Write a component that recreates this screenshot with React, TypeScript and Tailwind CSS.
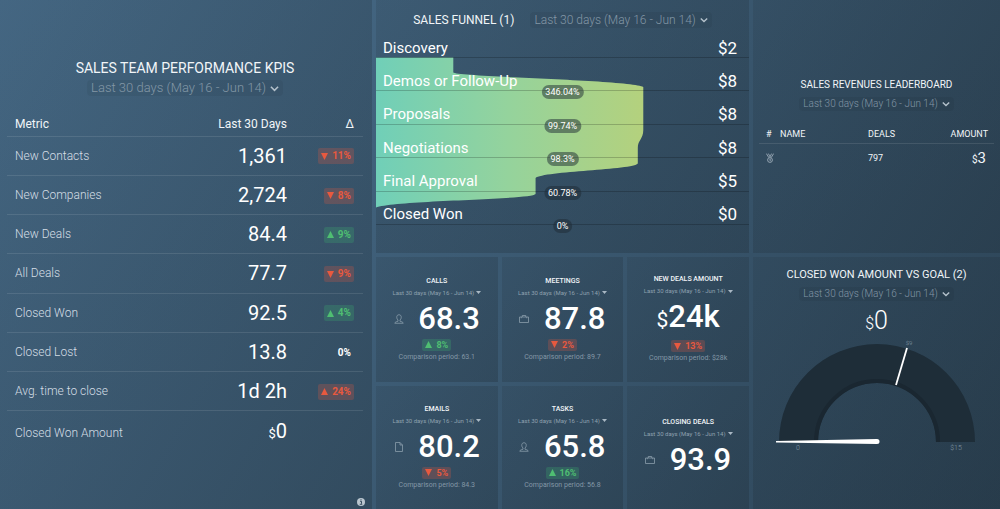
import type { ReactNode } from "react";

type Trend = "up" | "down";
type Tone = "good" | "bad" | "none";

interface Metric {
  name: string;
  value: string;
  prefix?: string;
  change?: string;
  trend?: Trend;
  tone?: Tone;
}

const metrics: Metric[] = [
  { name: "New Contacts", value: "1,361", change: "11%", trend: "down", tone: "bad" },
  { name: "New Companies", value: "2,724", change: "8%", trend: "down", tone: "bad" },
  { name: "New Deals", value: "84.4", change: "9%", trend: "up", tone: "good" },
  { name: "All Deals", value: "77.7", change: "9%", trend: "down", tone: "bad" },
  { name: "Closed Won", value: "92.5", change: "4%", trend: "up", tone: "good" },
  { name: "Closed Lost", value: "13.8", change: "0%", tone: "none" },
  { name: "Avg. time to close", value: "1d 2h", change: "24%", trend: "up", tone: "bad" },
  { name: "Closed Won Amount", value: "0", prefix: "$" },
];

const stages = [
  { name: "Discovery", amount: "$2" },
  { name: "Demos or Follow-Up", amount: "$8", rate: "346.04%" },
  { name: "Proposals", amount: "$8", rate: "99.74%" },
  { name: "Negotiations", amount: "$8", rate: "98.3%" },
  { name: "Final Approval", amount: "$5", rate: "60.78%" },
  { name: "Closed Won", amount: "$0", rate: "0%" },
];

const toneClass: Record<Tone, string> = {
  good: "bg-[#3cb371]/25 text-[#4fbe72]",
  bad: "bg-[#e0563f]/25 text-[#e8593f]",
  none: "text-white",
};

function Panel({ className = "", children }: { className?: string; children: ReactNode }) {
  return (
    <section className={`relative min-w-0 bg-linear-to-br from-[#1d2a33]/15 to-[#1d2a33]/30 ${className}`}>
      {children}
    </section>
  );
}

function Chevron({ className }: { className: string }) {
  return (
    <svg viewBox="0 0 10 10" className={className} fill="none" stroke="currentColor" strokeWidth="1.7" aria-hidden="true">
      <path d="M1 3l4 4 4-4" />
    </svg>
  );
}

function Caret() {
  return (
    <svg viewBox="0 0 10 6" className="h-[3px] w-[5px] text-[#a9b8c4]" fill="currentColor" aria-hidden="true">
      <path d="M0 0h10L5 6z" />
    </svg>
  );
}

function DateRange({ className = "", chevron = "size-2" }: { className?: string; chevron?: string }) {
  return (
    <button type="button" className={`inline-flex items-center gap-1 rounded bg-black/5 px-1 font-light text-[#8397a6] ${className}`}>
      Last 30 days (May 16 - Jun 14)
      <Chevron className={`${chevron} text-[#b4c1cb]`} />
    </button>
  );
}

function Delta({ value, trend, tone, className = "" }: { value: string; trend?: Trend; tone: Tone; className?: string }) {
  return (
    <span className={`inline-flex items-center gap-1 rounded-xs px-[3px] font-bold ${toneClass[tone]} ${className}`}>
      {trend && (
        <svg viewBox="0 0 10 10" className="size-[7px]" fill="currentColor" aria-hidden="true">
          <path d={trend === "up" ? "M5 0l5 10H0z" : "M0 0h10L5 10z"} />
        </svg>
      )}
      {value}
    </span>
  );
}

function PersonIcon() {
  return (
    <svg viewBox="0 0 20 20" className="size-[10px]" fill="none" stroke="currentColor" strokeWidth="1.5" aria-hidden="true">
      <path d="M10 1.5c-3 0-4.5 2-4.500 5 0 2.500 1 4.500 2.500 5.500v2.500c-3 .8-6 1.500-6.500 4h17c-.5-2.500-3.500-3.200-6.500-4V12c1.500-1 2.500-3 2.500-5.500 0-3-1.500-5-4.500-5z" />
    </svg>
  );
}

function BriefcaseIcon() {
  return (
    <svg viewBox="0 0 20 20" className="size-[10px]" fill="none" stroke="currentColor" strokeWidth="1.5" aria-hidden="true">
      <path d="M1 6h18v11H1zM6.500 6V3h7v3M4.500 6v2.500M15.500 6v2.500" />
    </svg>
  );
}

function FileIcon() {
  return (
    <svg viewBox="0 0 20 20" className="size-[10px]" fill="none" stroke="currentColor" strokeWidth="1.5" aria-hidden="true">
      <path d="M3 1h9l5 5v13H3zM12 1v5h5" />
    </svg>
  );
}

function MedalIcon() {
  return (
    <svg viewBox="0 0 20 24" className="h-[10px] w-2 text-[#a9b8c4]" fill="none" stroke="currentColor" strokeWidth="2" aria-hidden="true">
      <path d="M1 1l6 10M6 1l4 8 4-8M19 1l-6 10" />
      <circle cx="10" cy="17" r="6" />
      <path d="M9 15l1.500-1v6" />
    </svg>
  );
}

function KpiPanel() {
  return (
    <Panel className="pt-[60px] pr-[9px] pl-[7px]">
      <header className="flex flex-col items-center">
        <h2 className="text-[14px] leading-4 text-[#f1f5f8]">SALES TEAM PERFORMANCE KPIS</h2>
        <DateRange className="mt-1 text-[13px] leading-4" chevron="size-[9px]" />
      </header>

      <table className="mt-4 h-[342px] w-full border-collapse">
        <thead>
          <tr className="h-6 border-b border-white/10 text-[12px] leading-4 text-[#f1f5f8]">
            <th className="pl-2 text-left font-normal">Metric</th>
            <th className="text-right font-normal">Last 30 Days</th>
            <th className="w-[76px] pr-[9px] text-right font-normal">Δ</th>
          </tr>
        </thead>
        <tbody>
          {metrics.map((m) => (
            <tr key={m.name} className="border-b border-white/10 last:border-0">
              <td className="pl-2 text-[12px] leading-4 font-light text-[#d5dee5]">{m.name}</td>
              <td className="text-right text-[20px] leading-6 text-white">
                {m.prefix && <span className="text-[13px]">{m.prefix}</span>}
                {m.value}
              </td>
              <td className="pr-[9px] text-right leading-4">
                {m.change && <Delta value={m.change} trend={m.trend} tone={m.tone ?? "none"} className="text-[10px] leading-4" />}
              </td>
            </tr>
          ))}
        </tbody>
      </table>

      <button type="button" aria-label="Info" className="absolute right-[7px] bottom-[3px]">
        <svg viewBox="0 0 16 16" className="size-2" aria-hidden="true">
          <circle cx="8" cy="8" r="8" fill="#b9c5ce" />
          <path d="M6 6.500h3v5M5.500 12.500h5M8 2.500v2" stroke="#33495b" strokeWidth="2" fill="none" />
        </svg>
      </button>
    </Panel>
  );
}

function FunnelPanel() {
  return (
    <Panel className="h-[253px] pt-3">
      <header className="flex items-center justify-center gap-4">
        <h2 className="text-[12px] leading-4 text-[#f1f5f8]">SALES FUNNEL (1)</h2>
        <DateRange className="text-[12px] leading-4" />
      </header>

      <div className="relative mt-[10px] h-[187px]">
        <svg viewBox="0 0 374 187" preserveAspectRatio="none" className="absolute inset-0 size-full" aria-hidden="true">
          <defs>
            <linearGradient id="funnel">
              <stop offset="0" stopColor="#70cfb8" />
              <stop offset="0.5" stopColor="#95d39c" />
              <stop offset="1" stopColor="#b4d17d" />
            </linearGradient>
          </defs>
          <path
            fill="url(#funnel)"
            d="M0 19.500H77.500V34.500C82 39 258 42 268 49V92C268 101 262.500 102 262.500 110V125.500C258 132 168 133 160 140V156C156 162 20 162 0 169.500Z"
          />
        </svg>

        <ul className="relative flex h-full flex-col justify-between">
          {stages.map((s) => (
            <li key={s.name} className="relative flex h-5 items-center justify-between border-b border-black/20 px-[7px] pr-3 text-white">
              <span className="text-[15px] leading-5">{s.name}</span>
              <span className="text-[17px] leading-5">{s.amount}</span>
              {s.rate && (
                <span className="absolute top-[14px] left-1/2 -translate-x-1/2 rounded-full bg-[#1d2a33]/50 px-1 text-[9px] leading-[14px]">
                  {s.rate}
                </span>
              )}
            </li>
          ))}
        </ul>
      </div>
    </Panel>
  );
}

interface StatProps {
  title: string;
  value: string;
  prefix?: string;
  icon?: ReactNode;
  change?: string;
  trend?: Trend;
  tone?: Tone;
  comparison?: string;
}

function StatCard({ title, value, prefix, icon, change, trend, tone = "none", comparison }: StatProps) {
  return (
    <Panel className="flex flex-col items-center justify-center pb-[2px]">
      <h3 className="text-[7px] leading-2 font-medium text-[#f1f5f8]">{title}</h3>
      <button type="button" className="mt-1 flex items-center gap-[2px] text-[6px] leading-2 text-[#8fa1af]">
        Last 30 days (May 16 - Jun 14)
        <Caret />
      </button>
      <div className="mt-[6px] flex w-[86px] items-center justify-center">
        {icon && <span className="mr-auto text-[#8fa1af]">{icon}</span>}
        <p className="text-[31px] leading-8 font-medium text-white">
          {prefix && <span className="text-[21px] font-normal">{prefix}</span>}
          {value}
        </p>
      </div>
      {change && <Delta value={change} trend={trend} tone={tone} className="mt-1 text-[9px] leading-3" />}
      {comparison && <p className="mt-[2px] text-[7px] leading-2 text-[#8397a6]">Comparison period: {comparison}</p>}
    </Panel>
  );
}

function LeaderboardPanel() {
  return (
    <Panel className="h-[253px] px-[6px] pt-[77px]">
      <header className="flex flex-col items-center">
        <h2 className="text-[10px] leading-4 text-[#f1f5f8]">SALES REVENUES LEADERBOARD</h2>
        <DateRange className="mt-1 text-[10px] leading-[14px]" />
      </header>

      <table className="mt-[15px] w-full border-collapse text-[9px] text-[#f1f5f8]">
        <thead>
          <tr className="h-[17px] border-b border-white/10 leading-3">
            <th className="w-5 pl-[7px] text-left font-normal">#</th>
            <th className="pl-[1px] text-left font-normal">NAME</th>
            <th className="w-16 text-left font-normal">DEALS</th>
            <th className="w-[62px] pr-[6px] text-right font-normal">AMOUNT</th>
          </tr>
        </thead>
        <tbody>
          <tr className="h-[30px]">
            <td className="pl-[7px]"><MedalIcon /></td>
            <td />
            <td>797</td>
            <td className="pr-2 text-right text-[10px]">
              $<span className="text-[15px]">3</span>
            </td>
          </tr>
        </tbody>
      </table>
    </Panel>
  );
}

function GoalPanel() {
  return (
    <Panel className="flex flex-1 flex-col items-center pt-[10px]">
      <h2 className="text-[11px] leading-4 text-[#f1f5f8]">CLOSED WON AMOUNT VS GOAL (2)</h2>
      <DateRange className="mt-1 text-[10px] leading-[14px]" />
      <p className="mt-[6px] text-[25px] leading-7 font-light text-white">
        <span className="text-[16px]">$</span>0
      </p>

      <svg viewBox="0 0 206 116" className="mt-[2px] h-[116px] w-[206px] overflow-visible font-light" role="img" aria-label="Closed won amount against goal">
        <path d="M5 102A98 98 0 0 1 201 102H162A59 59 0 0 0 44 102Z" fill="#1e2d38" />
        <path d="M42 102A61 61 0 0 1 164 102" fill="none" stroke="#1a2731" strokeWidth="4" />
        <path d="M133 8L122 45" stroke="#fff" strokeWidth="1.800" />
        <path d="M2 101l101-2a2.200 2.200 0 0 1 0 5L2 102.500z" fill="#fff" />
        <g fill="#8397a6" fontSize="7">
          <text x="135" y="5" textAnchor="middle" fontSize="6">$9</text>
          <text x="24" y="110" textAnchor="middle">0</text>
          <text x="182" y="110" textAnchor="middle">$15</text>
        </g>
      </svg>
    </Panel>
  );
}

export default function App() {
  return (
    <main className="grid min-h-screen grid-cols-[372fr_373fr_247fr] gap-1 bg-linear-[120deg] from-[#4b7190] to-[#2c4355] font-[Roboto,sans-serif]">
      <KpiPanel />

      <div className="flex min-w-0 flex-col gap-1">
        <FunnelPanel />
        <div className="grid flex-1 grid-cols-3 grid-rows-[125fr_123fr] gap-1">
          <StatCard title="CALLS" value="68.3" icon={<PersonIcon />} change="8%" trend="up" tone="good" comparison="63.1" />
          <StatCard title="MEETINGS" value="87.8" icon={<BriefcaseIcon />} change="2%" trend="down" tone="bad" comparison="89.7" />
          <StatCard title="NEW DEALS AMOUNT" value="24k" prefix="$" change="13%" trend="down" tone="bad" comparison="$28k" />
          <StatCard title="EMAILS" value="80.2" icon={<FileIcon />} change="5%" trend="down" tone="bad" comparison="84.3" />
          <StatCard title="TASKS" value="65.8" icon={<PersonIcon />} change="16%" trend="up" tone="good" comparison="56.8" />
          <StatCard title="CLOSING DEALS" value="93.9" icon={<BriefcaseIcon />} />
        </div>
      </div>

      <div className="flex min-w-0 flex-col gap-1">
        <LeaderboardPanel />
        <GoalPanel />
      </div>
    </main>
  );
}
